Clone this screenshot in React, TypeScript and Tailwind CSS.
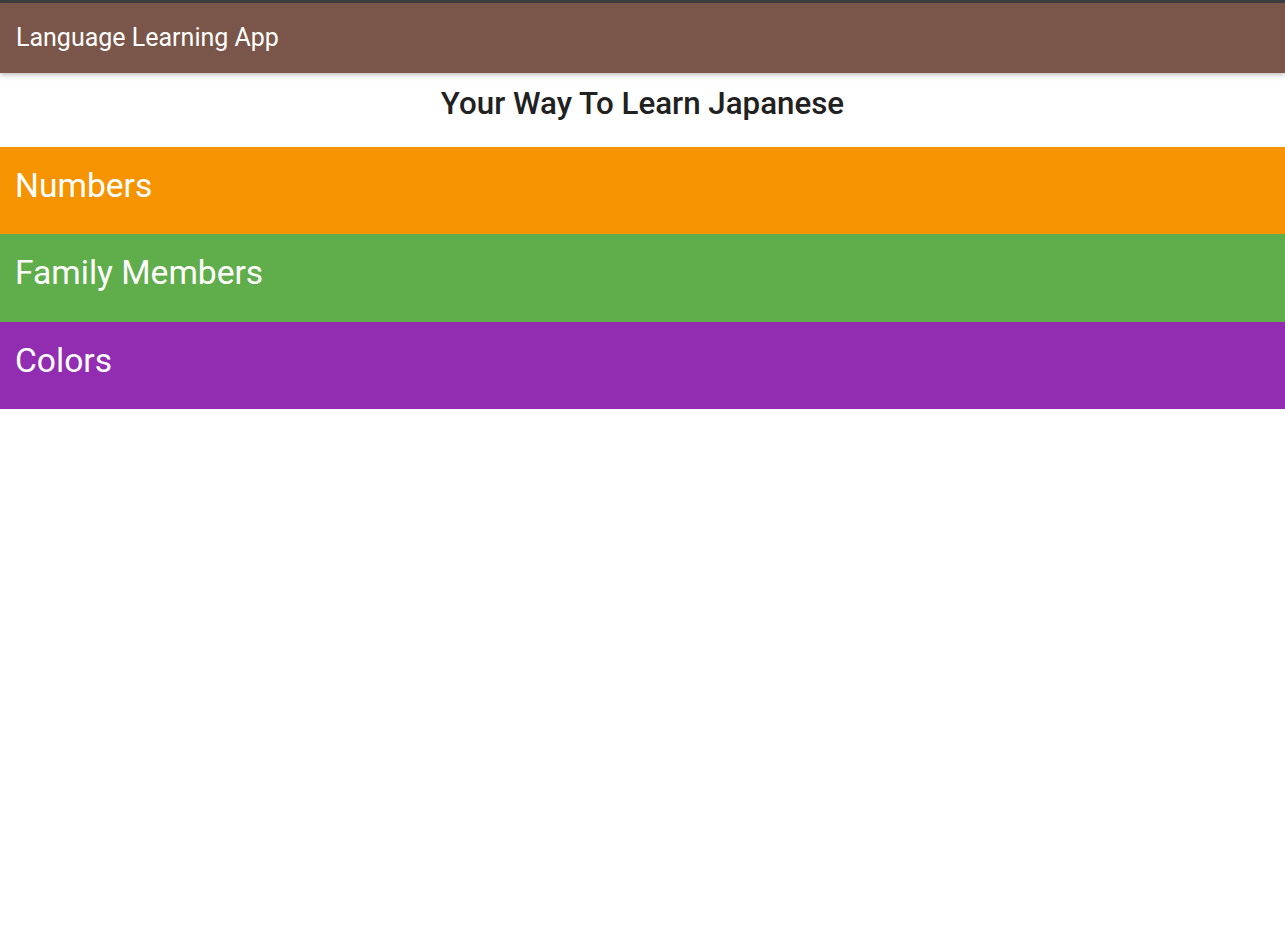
const categories = [
  { id: 1, title: "Numbers", color: "bg-[#f59300]" },
  { id: 2, title: "Family Members", color: "bg-[#60ad4b]" },
  { id: 3, title: "Colors", color: "bg-[#922db2]" },
];

export default function App() {
  return (
    <div className="min-h-screen bg-white font-['Roboto',sans-serif]">
      <div className="h-[3px] bg-[#3b3e42]" />
      {/* App bar */}
      <header className="relative z-10 flex h-[70px] items-center bg-[#795649] px-4 shadow-[0_2px_5px_rgba(0,0,0,0.25)]">
        <h1 className="text-[25px] text-white">Language Learning App</h1>
      </header>

      <h2 className="flex h-[74px] items-center justify-center pb-[12px] text-[31.3px] font-medium text-[#212121]">
        Your Way To Learn Japanese
      </h2>

      <div className="flex flex-col">
        {categories.map((category) => (
          <div
            key={category.id}
            className={`${category.color} h-[87.33px] px-[15px] pt-[19px] text-[33.6px] leading-[1.2] text-white`}
          >
            {category.title}
          </div>
        ))}
      </div>
    </div>
  );
}
